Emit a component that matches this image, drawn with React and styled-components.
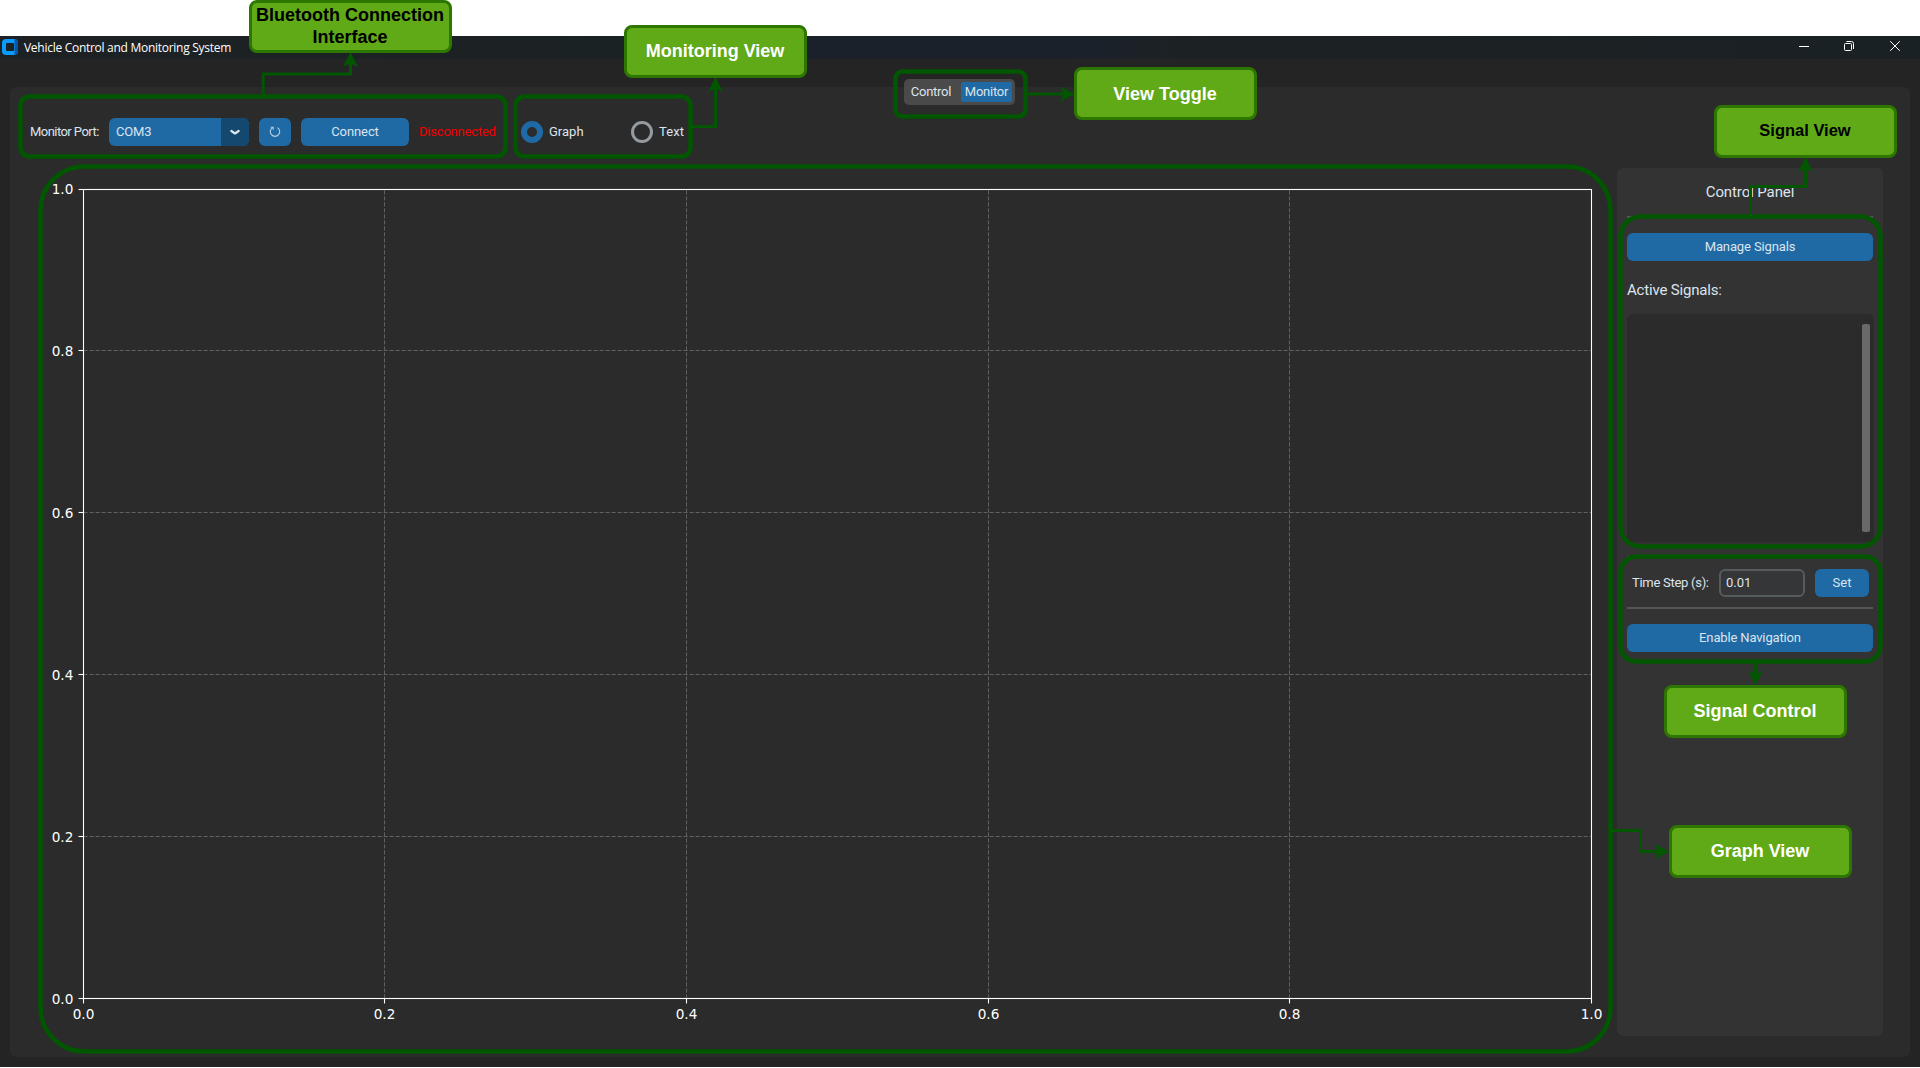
import React from "react";
import styled, { createGlobalStyle } from "styled-components";

const GlobalStyle = createGlobalStyle`
  *, *::before, *::after { box-sizing: border-box; }
  body { margin: 0; background: #fff; overflow: hidden; }
`;

const blue = "#1f6aa5";
const ink = "#dce4ee";
const outline = "#005700";

const Page = styled.div`
  position: relative;
  display: flex;
  flex-direction: column;
  width: 1920px;
  height: 1067px;
  padding-top: 36px;
  font-family: Roboto, "Liberation Sans", sans-serif;
  font-size: 13px;
  color: ${ink};
`;

const TitleBar = styled.header`
  display: flex;
  align-items: flex-start;
  height: 23px;
  padding: 3px 20px 0 2px;
  background: linear-gradient(90deg, #1e2124 0%, #1b2223 30%, #1a212b 42%, #1a212b 56%, #1c2223 62%, #1a2125 100%);
`;

const WindowTitle = styled.span`
  margin: 1px auto 0 6px;
  font: 12px/16px "Open Sans", "Noto Sans", sans-serif;
  letter-spacing: -0.28px;
  color: #fff;
  white-space: nowrap;
`;

const Body = styled.main`
  flex: 1;
  display: flex;
  flex-direction: column;
  align-items: center;
  padding: 20px 10px 10px;
  background: #242424;
`;

const Segments = styled.div`
  position: relative;
  z-index: 1;
  display: flex;
  align-items: center;
  width: 111px;
  height: 26px;
  margin: 0 1px -18px 0;
  padding: 0 3px;
  border-radius: 5px;
  background: #4a4a4a;
`;

const Segment = styled.button`
  flex: 0 0 ${(p) => p.$width}px;
  height: 20px;
  padding: 0 ${(p) => p.$inset || 0}px 1px 0;
  border: 0;
  border-radius: 2px;
  background: ${(p) => (p.$active ? blue : "transparent")};
  font: inherit;
  line-height: 20px;
  letter-spacing: -0.25px;
  color: ${ink};
  white-space: nowrap;
`;

const Panel = styled.section`
  flex: 1;
  align-self: stretch;
  display: flex;
  flex-direction: column;
  padding-top: 31px;
  border-radius: 6px;
  background: #2b2b2b;
`;

const Toolbar = styled.div`
  display: flex;
  align-items: center;
  gap: 10px;
  height: 28px;
  padding-left: 20px;
`;

const Label = styled.span`
  flex: none;
  width: ${(p) => (p.$width ? `${p.$width}px` : "auto")};
  padding-bottom: 1px;
  letter-spacing: ${(p) => p.$track || 0}px;
  color: ${(p) => p.$color || ink};
  white-space: nowrap;
`;

const Combo = styled.div`
  display: flex;
  align-items: center;
  justify-content: space-between;
  width: 140px;
  height: 28px;
  padding-left: 7px;
  border-radius: 6px;
  overflow: hidden;
  background: ${blue};
`;

const ComboArrow = styled.span`
  display: grid;
  place-items: center;
  width: 28px;
  height: 28px;
  background: #14486f;
`;

const Button = styled.button`
  display: grid;
  place-items: center;
  width: ${(p) => p.$width}px;
  height: 28px;
  padding: 0 0 1px;
  border: 0;
  border-radius: 6px;
  background: ${blue};
  font: inherit;
  letter-spacing: ${(p) => p.$track || 0}px;
  color: ${ink};
`;

const RadioGroup = styled.div`
  display: flex;
  margin-left: 16px;
`;

const Radio = styled.label`
  display: flex;
  align-items: center;
  gap: 6px;
  width: 110px;
`;

const Ring = styled.span`
  width: 22px;
  height: 22px;
  border: ${(p) => (p.$on ? `6px solid ${blue}` : "3px solid #949a9f")};
  border-radius: 50%;
`;

const Content = styled.div`
  flex: 1;
  display: flex;
  gap: 10px;
  padding: 22px 27px 21px 0;
`;

const Chart = styled.svg`
  display: block;
  width: 1597px;
  height: 868px;
`;

const SidePanel = styled.aside`
  display: flex;
  flex-direction: column;
  width: 266px;
  padding: 0 10px;
  border-radius: 6px;
  background: #333;
`;

const SideTitle = styled.h2`
  margin: 0;
  height: 48px;
  font-size: 15px;
  font-weight: 400;
  line-height: 48px;
  letter-spacing: -0.1px;
  text-align: center;
`;

const Rule = styled.hr`
  width: 100%;
  height: 2px;
  margin: ${(p) => p.$margin};
  border: 0;
  background: #555;
`;

const SideHeading = styled.h3`
  margin: 15px 0 10px;
  height: 28px;
  font-size: 15px;
  font-weight: 400;
  line-height: 28px;
  letter-spacing: -0.18px;
`;

const SignalList = styled.div`
  display: flex;
  justify-content: flex-end;
  width: 247px;
  height: 228px;
  padding: 10px 4px;
  border-radius: 6px;
  background: #2b2b2b;
`;

const ScrollThumb = styled.div`
  width: 8px;
  border-radius: 2px;
  background: #696969;
`;

const StepRow = styled.div`
  display: flex;
  align-items: center;
  gap: 10px;
  padding-left: 5px;
`;

const Entry = styled.div`
  width: 86px;
  height: 28px;
  padding-left: 5px;
  border: 2px solid #565b5e;
  border-radius: 6px;
  background: #343638;
  line-height: 23px;
`;

const Overlay = styled.svg`
  position: absolute;
  inset: 0;
`;

const Callout = styled.div`
  position: absolute;
  left: ${(p) => p.$x}px;
  top: ${(p) => p.$y}px;
  display: grid;
  place-items: center;
  width: ${(p) => p.$w || 183}px;
  height: 53px;
  padding: ${(p) => p.$drop || 0}px 1px ${(p) => p.$lift || 0}px 0;
  border: 3px solid #2d7600;
  border-radius: 8px;
  background: #60a917;
  font: bold ${(p) => p.$size || 18}px/21.6px "Liberation Sans", Arial, sans-serif;
  text-align: center;
  white-space: nowrap;
  color: ${(p) => (p.$dark ? "#000" : "#fff")};
`;

const plot = { left: 83.5, right: 1591.5, top: 189.5, bottom: 998.5 };
const xTicks = [["0.0", 83.5], ["0.2", 384.5], ["0.4", 686.5], ["0.6", 988.5], ["0.8", 1289.5], ["1.0", 1591.5]];
// label, tick position, label baseline
const yTicks = [
  ["0.0", 998.5, 1004],
  ["0.2", 836.5, 842],
  ["0.4", 674.5, 680],
  ["0.6", 512.5, 518],
  ["0.8", 350.5, 356],
  ["1.0", 189.5, 194],
];

const outlines = [
  [18.5, 94.5, 489, 64, 11],
  [513.5, 94.5, 179, 64, 11],
  [893.5, 69.5, 134, 49, 9],
  [38.5, 164.5, 1574, 889, 46],
  [1618.5, 214.5, 264, 334, 22],
  [1618.5, 554.5, 264, 109, 18],
];

const links = [
  ["M263.2 96V74H350.5V62", 350.5, 52, 0],
  ["M692 126.5H715.5V88", 715.5, 77, 0],
  ["M1027 94H1064", 1075, 94, 90],
  ["M1750.5 216V186.5H1805.5V168", 1805.5, 157, 0],
  ["M1755.5 663V675", 1755.5, 685.5, 180],
  ["M1611 830.5H1640.5V851.5H1658", 1669.5, 851.5, 90],
];

function PlotArea() {
  return (
    <Chart viewBox="10 168 1597 868">
      <g stroke="#616161" strokeWidth="1" strokeDasharray="4.2 1.8">
        {xTicks.slice(1, 5).map(([t, x]) => (
          <line key={t} x1={x} x2={x} y1={plot.bottom} y2={plot.top} />
        ))}
        {yTicks.slice(1, 5).map(([t, y]) => (
          <line key={t} x1={plot.left} x2={plot.right} y1={y} y2={y} />
        ))}
      </g>
      <g stroke="#fff" strokeWidth="1.1" fill="none">
        <rect x={plot.left} y={plot.top} width={plot.right - plot.left} height={plot.bottom - plot.top} />
        {xTicks.map(([t, x]) => <path key={t} d={`M${x} ${plot.bottom}v5`} />)}
        {yTicks.map(([t, y]) => <path key={t} d={`M${plot.left} ${y}h-5`} />)}
      </g>
      <g fill="#fff" fontFamily='"DejaVu Sans", sans-serif' fontSize="13.6">
        {xTicks.map(([t, x]) => <text key={t} x={x} y="1019" textAnchor="middle">{t}</text>)}
        {yTicks.map(([t, , base]) => <text key={t} x="73.3" y={base} textAnchor="end">{t}</text>)}
      </g>
    </Chart>
  );
}

export default function App() {
  return (
    <>
      <GlobalStyle />
      <Page>
        <TitleBar>
          <svg width="16" height="16" viewBox="0 0 16 16">
            <rect width="16" height="16" rx="4" fill="#0a9bff" />
            <path d="M12.5 0.1A4 4 0 0 1 16 4v8a4 4 0 0 1-3.5 3.9z" fill="#0457a8" />
            <rect x="4" y="4" width="8" height="8" rx="1" fill="#1d2124" />
          </svg>
          <WindowTitle>Vehicle Control and Monitoring System</WindowTitle>
          <svg width="101" height="14" viewBox="1799 39 101 14" fill="none" stroke="#fff" strokeWidth="1">
            <path d="M1799 46.5h10" />
            <rect x="1844.5" y="43.5" width="7" height="7" rx="1" />
            <path d="M1846.5 41.5h5a2 2 0 0 1 2 2v5.5" />
            <path d="M1890.2 41.2l9.6 9.6M1899.8 41.2l-9.6 9.6" />
          </svg>
        </TitleBar>

        <Body>
          <Segments>
            <Segment $width={54} $inset={6}>Control</Segment>
            <Segment $width={51} $active>Monitor</Segment>
          </Segments>

          <Panel>
            <Toolbar>
              <Label $width={69} $track={-0.55}>Monitor Port:</Label>
              <Combo>
                <Label $track={-0.2}>COM3</Label>
                <ComboArrow>
                  <svg width="10" height="6" viewBox="0 0 10 6" fill="none" stroke={ink} strokeWidth="2.2" strokeLinecap="round" strokeLinejoin="round">
                    <path d="M1.4 2L5 4.5L8.6 2" />
                  </svg>
                </ComboArrow>
              </Combo>
              <Button $width={32}>
                <svg width="12" height="12" viewBox="0 0 12 12" fill="none" stroke="#b9cfe2" strokeWidth="1.1">
                  <path d="M3.6 1.6A4.7 4.7 0 1 0 8.4 1.6" />
                  <path d="M1.6 1.3H4.2V3.8" />
                </svg>
              </Button>
              <Button $width={108} $track={-0.1}>Connect</Button>
              <Label $width={76} $track={-0.2} $color="#f00000">Disconnected</Label>
              <RadioGroup>
                <Radio><Ring $on /><Label>Graph</Label></Radio>
                <Radio><Ring /><Label $track={0.1}>Text</Label></Radio>
              </RadioGroup>
            </Toolbar>

            <Content>
              <PlotArea />
              <SidePanel>
                <SideTitle>Control Panel</SideTitle>
                <Rule $margin="0 0 15px" />
                <Button $width={246} $track={-0.13}>Manage Signals</Button>
                <SideHeading>Active Signals:</SideHeading>
                <SignalList><ScrollThumb /></SignalList>
                <Rule $margin="14px 0 11px" />
                <StepRow>
                  <Label $width={77} $track={-0.28}>Time Step (s):</Label>
                  <Entry>0.01</Entry>
                  <Button $width={54}>Set</Button>
                </StepRow>
                <Rule $margin="10px 0 15px" />
                <Button $width={246} $track={-0.15}>Enable Navigation</Button>
              </SidePanel>
            </Content>
          </Panel>
        </Body>

        <Overlay width="1920" height="1067" viewBox="0 0 1920 1067" fill="none" stroke={outline}>
          {outlines.map(([x, y, w, h, r]) => (
            <rect key={`${x}-${y}`} x={x + 2} y={y + 2} width={w - 4} height={h - 4} rx={r - 2} strokeWidth="4.5" />
          ))}
          {links.map(([d, x, y, turn]) => (
            <g key={d}>
              <path d={d} strokeWidth="3" />
              <path d="M0 0L7.5 15L0 11.3L-7.5 15Z" fill={outline} stroke="none" transform={`translate(${x} ${y}) rotate(${turn})`} />
            </g>
          ))}
        </Overlay>
        <Callout $x={249} $y={0} $w={203} $dark>Bluetooth Connection<br />Interface</Callout>
        <Callout $x={624} $y={25}>Monitoring View</Callout>
        <Callout $x={1074} $y={67.4} $drop={1.5}>View Toggle</Callout>
        <Callout $x={1714} $y={105} $size={16.5} $lift={1} $dark>Signal View</Callout>
        <Callout $x={1664} $y={685}>Signal Control</Callout>
        <Callout $x={1669} $y={825}>Graph View</Callout>
      </Page>
    </>
  );
}
